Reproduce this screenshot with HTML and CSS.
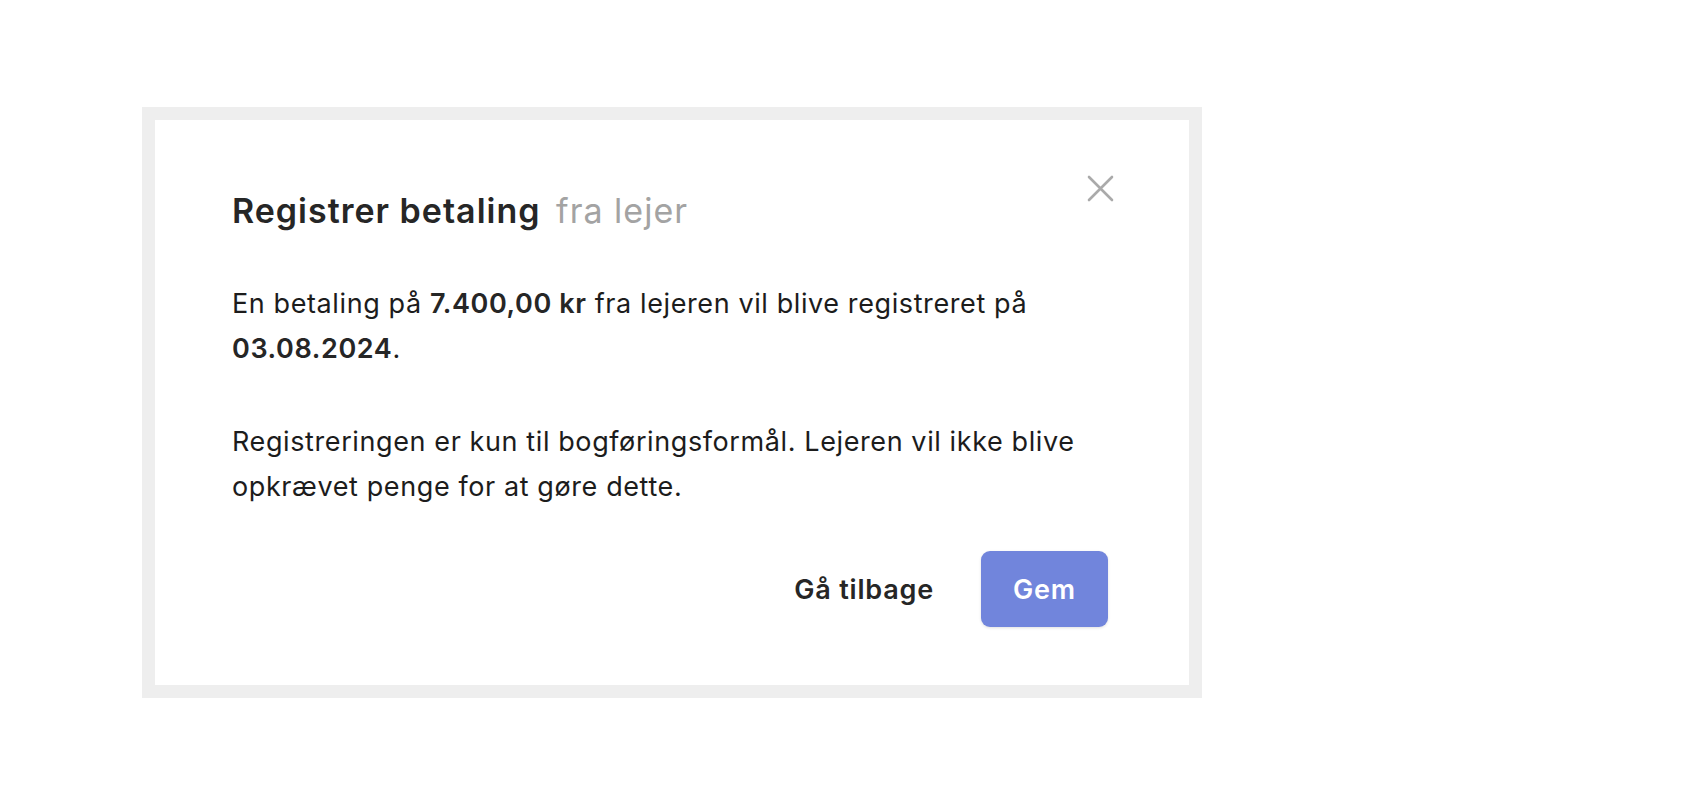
FILE: index.html
```html
<!DOCTYPE html>
<html lang="da">
  <head>
    <meta charset="UTF-8" />
    <meta name="viewport" content="width=device-width, initial-scale=1.0" />
    <link rel="stylesheet" href="styles.css">
    <title>Registrer betaling</title>
  </head>
  <body>
    <div class="page">
      <div class="frame">
        <div class="modal">
          <div class="modal-header">
            <h2 class="modal-title">Registrer betaling <span class="muted">fra lejer</span></h2>
            <button class="close-button" aria-label="Luk">
              <svg width="27" height="27" viewBox="0 0 27 27">
                <path d="M2 2 L25 25 M25 2 L2 25" stroke="#aaaaaa" stroke-width="2.6" stroke-linecap="round" fill="none" />
              </svg>
            </button>
          </div>
          <p class="text">En betaling på <b>7.400,00 kr</b> fra lejeren vil blive registreret på <b>03.08.2024</b>.</p>
          <p class="text">Registreringen er kun til bogføringsformål. Lejeren vil ikke blive opkrævet penge for at gøre dette.</p>
          <div class="actions">
            <button class="back-button">Gå tilbage</button>
            <button class="save-button">Gem</button>
          </div>
        </div>
      </div>
    </div>
  </body>
</html>
```

FILE: styles.css
```css
body {
    margin: 0;
    background: #fff;
    font-family: Inter, "Noto Sans", sans-serif;
    color: #1c1c1c;
}

.page {
    padding: 107px 0 0 142px;
}

.frame {
    width: 1034px;
    border: 13px solid #eeeeee;
}

.modal {
    background: #fff;
    padding: 55px 75px 58px 77px;
}

.modal-header {
    display: flex;
    justify-content: space-between;
    align-items: flex-start;
}

.modal-title {
    margin: 16px 0 0;
    font-size: 34px;
    line-height: 40px;
    font-weight: 600;
    color: #262626;
    letter-spacing: 1px;
}

.muted {
    font-weight: 400;
    color: #a3a3a3;
    margin-left: 6px;
}

.close-button {
    border: none;
    background: none;
    padding: 0;
    width: 27px;
    height: 27px;
    cursor: pointer;
}

.close-button svg {
    display: block;
}

.text {
    margin: 50px 0 0;
    font-size: 27px;
    line-height: 45px;
    letter-spacing: 0.6px;
    max-width: 880px;
}

.text + .text {
    margin-top: 48px;
}

.text b {
    font-weight: 600;
    color: #262626;
}

.actions {
    display: flex;
    justify-content: flex-end;
    align-items: center;
    gap: 47px;
    margin: 42px 6px 0 0;
}

.back-button {
    border: none;
    background: none;
    padding: 0;
    font-family: inherit;
    font-size: 27px;
    font-weight: 600;
    letter-spacing: 0.8px;
    color: #262626;
    cursor: pointer;
}

.save-button {
    border: none;
    width: 127px;
    height: 76px;
    border-radius: 9px;
    background: #7185dc;
    color: #fff;
    font-family: inherit;
    font-size: 27px;
    font-weight: 600;
    letter-spacing: 0.8px;
    box-shadow: 0 1px 3px rgba(0, 0, 0, 0.12);
    cursor: pointer;
}
```
